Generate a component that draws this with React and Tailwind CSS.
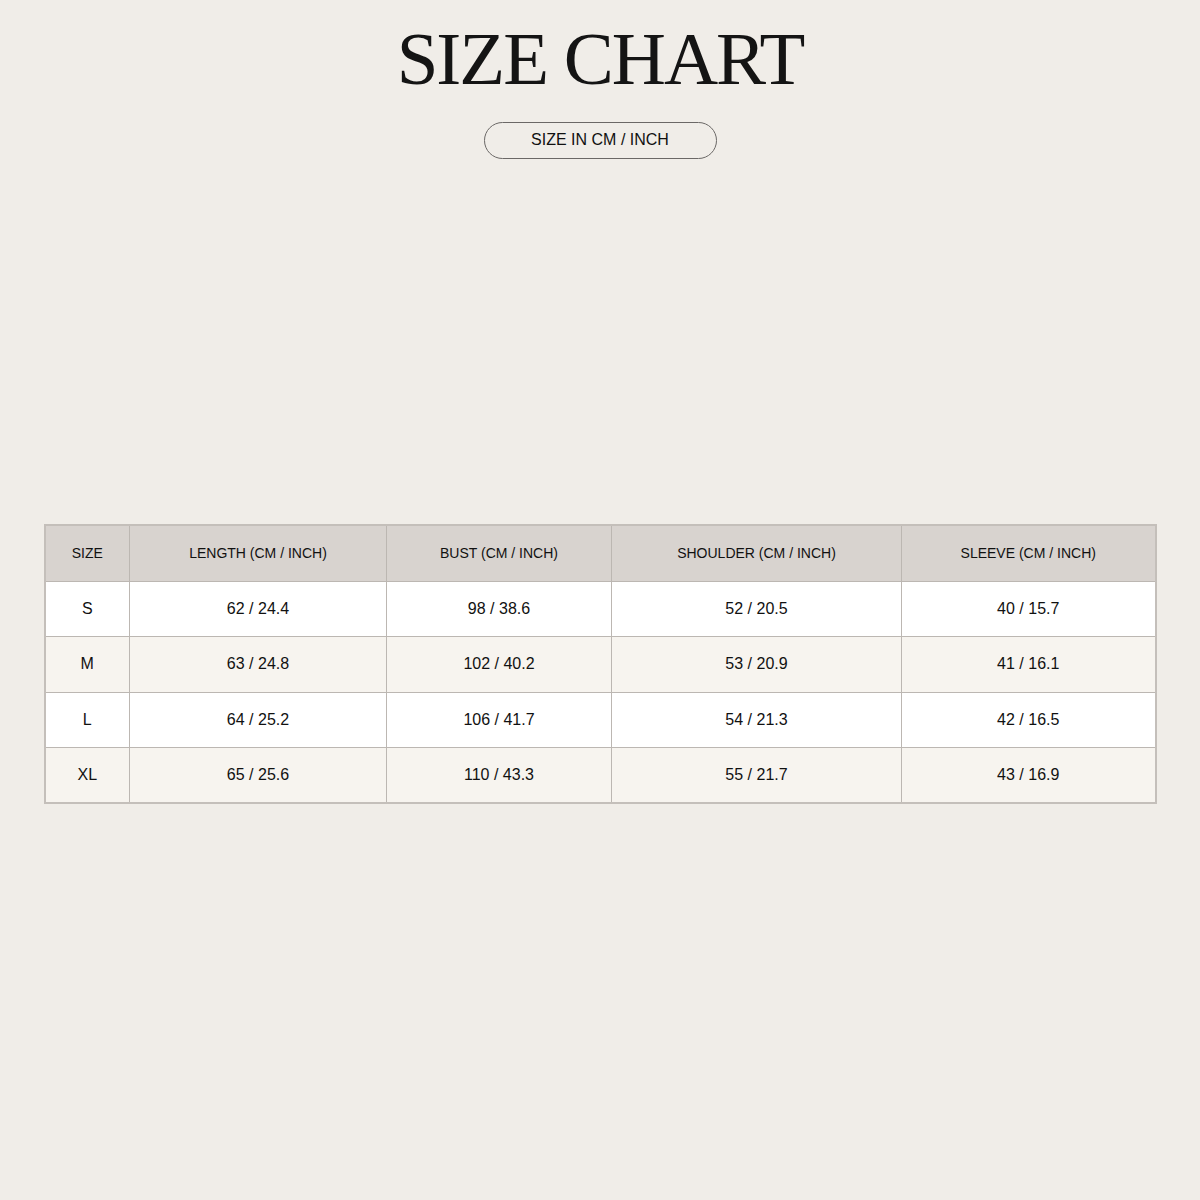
const columns = [
  { label: 'SIZE', width: 'w-[85px]' },
  { label: 'LENGTH (CM / INCH)', width: 'w-[257px]' },
  { label: 'BUST (CM / INCH)', width: 'w-[225px]' },
  { label: 'SHOULDER (CM / INCH)', width: 'w-[290px]' },
  { label: 'SLEEVE (CM / INCH)', width: 'w-[254px]' },
]

const rows = [
  ['S', '62 / 24.4', '98 / 38.6', '52 / 20.5', '40 / 15.7'],
  ['M', '63 / 24.8', '102 / 40.2', '53 / 20.9', '41 / 16.1'],
  ['L', '64 / 25.2', '106 / 41.7', '54 / 21.3', '42 / 16.5'],
  ['XL', '65 / 25.6', '110 / 43.3', '55 / 21.7', '43 / 16.9'],
]

export default function App() {
  return (
    <div className="w-[1200px] h-[1200px] bg-[#f0ede8] flex flex-col items-center font-['Liberation_Sans',Arial,sans-serif] text-[#111]">
      <h1 className="mt-[14px] font-['Liberation_Serif','Times_New_Roman',serif] text-[75px] leading-[90px] tracking-[-2px] text-[#141414]">
        SIZE CHART
      </h1>
      <div className="mt-[18px] w-[233px] h-[37px] rounded-full border border-[#6b6866] flex items-center justify-center text-[16px] pb-px">
        SIZE IN CM / INCH
      </div>

      <table className="mt-[365px] border-collapse border-2 border-[#c4bfba] text-center">
        <thead>
          <tr className="bg-[#d8d3cf] h-[56px]">
            {columns.map(c => (
              <th key={c.label} className={`${c.width} border border-[#bcb7b2] font-normal text-[14px]`}>
                {c.label}
              </th>
            ))}
          </tr>
        </thead>
        <tbody>
          {rows.map((r, i) => (
            <tr key={r[0]} className={i % 2 === 0 ? 'bg-white h-[55.5px]' : 'bg-[#f7f4ef] h-[55.5px]'}>
              {r.map((cell, j) => (
                <td key={j} className="border border-[#bcb7b2] text-[16px]">{cell}</td>
              ))}
            </tr>
          ))}
        </tbody>
      </table>
    </div>
  )
}
